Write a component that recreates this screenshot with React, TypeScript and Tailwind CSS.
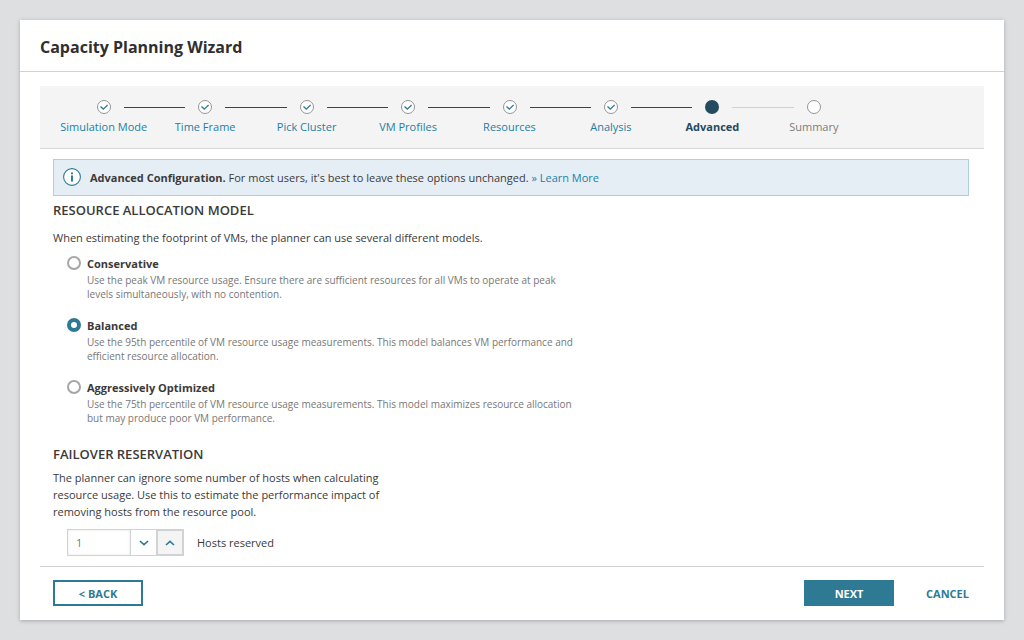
import React, { useState } from 'react'
import clsx from 'clsx'

type StepState = 'done' | 'current' | 'todo'

type Step = {
  name: string
  state: StepState
}

const steps: Step[] = [
  { name: 'Simulation Mode', state: 'done' },
  { name: 'Time Frame', state: 'done' },
  { name: 'Pick Cluster', state: 'done' },
  { name: 'VM Profiles', state: 'done' },
  { name: 'Resources', state: 'done' },
  { name: 'Analysis', state: 'done' },
  { name: 'Advanced', state: 'current' },
  { name: 'Summary', state: 'todo' },
]

const models = [
  {
    id: 'conservative',
    name: 'Conservative',
    description:
      'Use the peak VM resource usage. Ensure there are sufficient resources for all VMs to operate at peak levels simultaneously, with no contention.',
  },
  {
    id: 'balanced',
    name: 'Balanced',
    description:
      'Use the 95th percentile of VM resource usage measurements. This model balances VM performance and efficient resource allocation.',
  },
  {
    id: 'aggressive',
    name: 'Aggressively Optimized',
    description:
      'Use the 75th percentile of VM resource usage measurements. This model maximizes resource allocation but may produce poor VM performance.',
  },
]

const StepMarker = ({ state }: { state: StepState }) => (
  <svg viewBox="0 0 14 14" className="h-3.5 w-3.5 flex-none" aria-hidden="true">
    {state === 'current' ? (
      <circle cx="7" cy="7" r="7" fill="#244a61" />
    ) : (
      <circle cx="7" cy="7" r="6.5" fill="#fff" stroke="#949494" />
    )}
    {state === 'done' && (
      <path
        d="M3.5 6.5 6.3 9.1 10.6 5"
        fill="none"
        stroke="#2e7a94"
        strokeWidth="1.3"
      />
    )}
  </svg>
)

const Steps = () => (
  <nav
    aria-label="Progress"
    className="border-b border-[#d6d7d9] bg-[#f4f4f4] pt-3.5 pr-[18px] pb-[13px] pl-[13px]"
  >
    <ol className="grid grid-cols-9">
      {steps.map((step, index) => {
        const next = steps[index + 1]
        return (
          <li key={step.name} className="flex flex-col items-center">
            <div className="flex w-full items-center gap-[13px]">
              <span
                className={clsx(
                  'h-px flex-1',
                  index > 0 &&
                    (step.state === 'todo' ? 'bg-[#d0d2d3]' : 'bg-[#1f4b6b]'),
                )}
              />
              <StepMarker state={step.state} />
              <span
                className={clsx(
                  'h-px flex-1',
                  next &&
                    (next.state === 'todo' ? 'bg-[#d0d2d3]' : 'bg-[#1f4b6b]'),
                )}
              />
            </div>
            {step.state === 'done' ? (
              <a href="#" className="mt-1 whitespace-nowrap text-[#1b7fa7]">
                {step.name}
              </a>
            ) : (
              <span
                className={clsx(
                  'mt-1 whitespace-nowrap',
                  step.state === 'current'
                    ? 'font-bold text-[#244a61]'
                    : 'text-[#7c7c7c]',
                )}
              >
                {step.name}
              </span>
            )}
          </li>
        )
      })}
    </ol>
  </nav>
)

const Banner = () => (
  <div className="flex items-center gap-[9px] border border-[#a9d1de] bg-[#e6eef5] px-[9px] pt-2 pb-[9px]">
    <svg viewBox="0 0 18 18" className="h-[18px] w-[18px] flex-none" aria-hidden="true">
      <circle cx="9" cy="9" r="8.4" fill="#fff" stroke="#2e7a94" strokeWidth="1.1" />
      <path d="M8 4.5h2v1.7H8zM8 7.5h2V13.5H8z" fill="#2e7a94" />
    </svg>
    <p>
      <strong className="font-bold">Advanced Configuration.</strong> For most
      users, it's best to leave these options unchanged.{' '}
      <a href="#" className="text-[#1b7fa7]">
        » Learn More
      </a>
    </p>
  </div>
)

const Chevron = ({ up = false }: { up?: boolean }) => (
  <svg viewBox="0 0 10 6" className="h-1.5 w-2.5" aria-hidden="true">
    <path
      d={up ? 'M1 5 5 1.3 9 5' : 'M1 1 5 4.7 9 1'}
      fill="none"
      stroke="#2e7a94"
      strokeWidth="1.6"
    />
  </svg>
)

export default function App() {
  const [model, setModel] = useState('balanced')
  const [hosts, setHosts] = useState(1)

  return (
    <div className="flex min-h-screen flex-col bg-[#dedfe1] p-5 font-['Open_Sans',sans-serif] text-[11px]/[17px] text-[#3a3a3a]">
      <main className="flex flex-1 flex-col bg-white shadow-[0_1px_4px_rgba(0,0,0,0.25)]">
        <header className="border-b border-[#d0d2d3] px-5 pt-[15px] pb-[11px]">
          <h1 className="text-base/[25px] font-bold text-[#2f2f2f]">
            Capacity Planning Wizard
          </h1>
        </header>

        <div className="flex flex-1 flex-col px-5 pt-3.5 pb-3.5">
          <Steps />

          <div className="flex-1 pt-2.5 pr-[15px] pb-2 pl-[13px]">
            <Banner />

            <h2
              id="model-heading"
              className="mt-1.5 text-[13px]/[17px] font-semibold"
            >
              RESOURCE ALLOCATION MODEL
            </h2>
            <p className="mt-2.5">
              When estimating the footprint of VMs, the planner can use several
              different models.
            </p>
            <div
              role="radiogroup"
              aria-labelledby="model-heading"
              className="mt-[9px] ml-3.5 flex max-w-[510px] flex-col gap-4"
            >
              {models.map((item) => (
                <div key={item.id} className="flex gap-1.5">
                  <input
                    type="radio"
                    id={item.id}
                    name="model"
                    checked={model === item.id}
                    onChange={() => setModel(item.id)}
                    aria-describedby={`${item.id}-description`}
                    className="mt-px h-3.5 w-3.5 flex-none appearance-none rounded-full border-2 border-[#a6a6a6] bg-white checked:border-4 checked:border-[#2e7a94]"
                  />
                  <div>
                    <label htmlFor={item.id} className="block font-bold">
                      {item.name}
                    </label>
                    <p
                      id={`${item.id}-description`}
                      className="mt-px text-[10px]/[14px] text-[#777]"
                    >
                      {item.description}
                    </p>
                  </div>
                </div>
              ))}
            </div>

            <h2 className="mt-[21px] text-[13px]/[17px] font-semibold">
              FAILOVER RESERVATION
            </h2>
            <p className="mt-1.5 max-w-[340px]">
              The planner can ignore some number of hosts when calculating
              resource usage. Use this to estimate the performance impact of
              removing hosts from the resource pool.
            </p>
            <div className="mt-[9px] ml-3.5 flex items-center gap-[13px]">
              <div className="flex h-[27px]">
                <input
                  id="hosts"
                  type="text"
                  inputMode="numeric"
                  value={hosts}
                  onChange={(e) => setHosts(Number(e.target.value) || 0)}
                  className="w-16 border border-[#d0d2d3] px-2 text-[#777] shadow-[inset_0_0_3px_rgba(0,0,0,0.1)]"
                />
                <button
                  type="button"
                  aria-label="Fewer hosts"
                  onClick={() => setHosts(Math.max(0, hosts - 1))}
                  className="flex w-[25px] items-center justify-center border-y border-[#d0d2d3]"
                >
                  <Chevron />
                </button>
                <button
                  type="button"
                  aria-label="More hosts"
                  onClick={() => setHosts(hosts + 1)}
                  className="flex w-7 items-center justify-center border-2 border-[#d0d2d3] bg-[#f4f4f4]"
                >
                  <Chevron up />
                </button>
              </div>
              <label htmlFor="hosts">Hosts reserved</label>
            </div>
          </div>

          <footer className="flex items-center border-t border-[#d0d2d3] pt-[13px] pr-[15px] pl-[13px] font-bold">
            <button
              type="button"
              className="h-[26px] w-[90px] border-2 border-[#2e7a94] text-[#2e7a94]"
            >
              &lt; BACK
            </button>
            <button
              type="button"
              className="ml-auto h-[26px] w-[90px] bg-[#2e7a94] text-white"
            >
              NEXT
            </button>
            <button type="button" className="ml-8 text-[#2e7a94]">
              CANCEL
            </button>
          </footer>
        </div>
      </main>
    </div>
  )
}
